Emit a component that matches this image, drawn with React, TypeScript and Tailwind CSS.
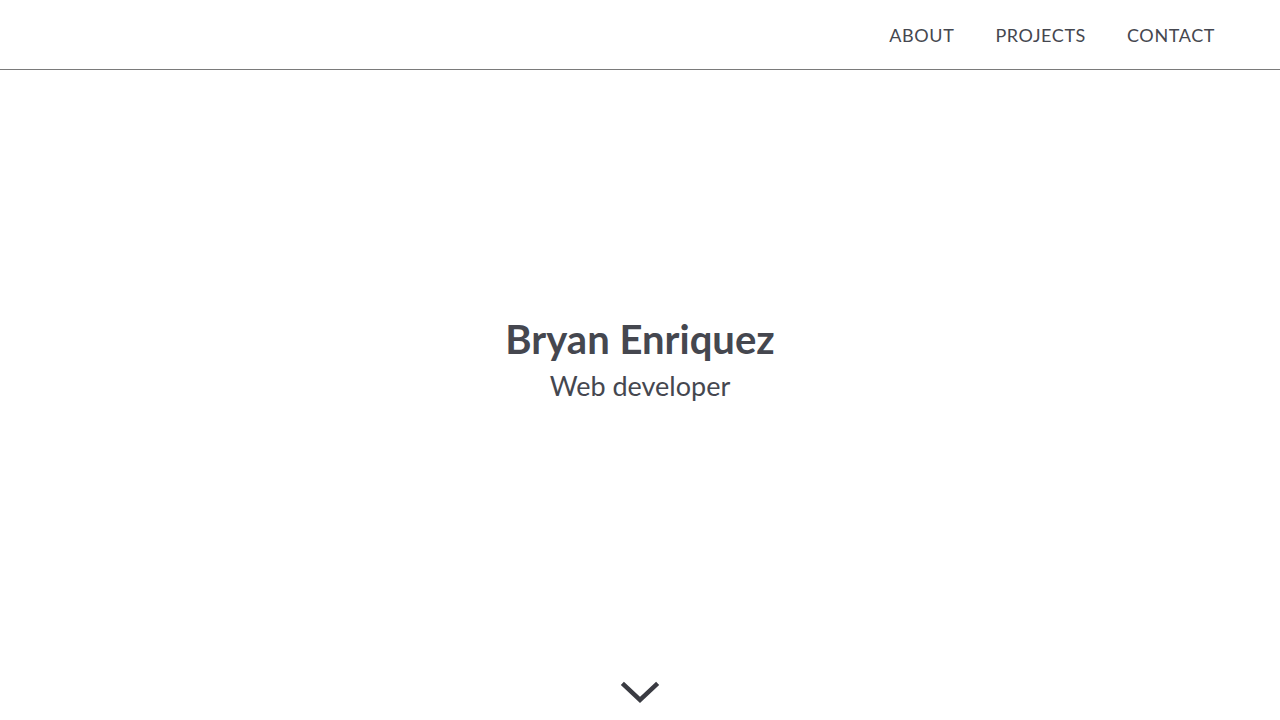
const App = () => {
  return (
    <div className="h-[720px] flex flex-col bg-white text-[#45474f] overflow-hidden" style={{ fontFamily: 'Lato, "Open Sans", sans-serif' }}>
      <header className="h-[70px] shrink-0 border-b border-[#7a7a7a] flex items-center justify-end pr-[65px]">
        <nav className="flex gap-[41px] text-[18px] tracking-[0.6px] uppercase pt-[1px]">
          <a href="#about">About</a>
          <a href="#projects">Projects</a>
          <a href="#contact">Contact</a>
        </nav>
      </header>

      <section className="flex-1 flex flex-col items-center justify-center pb-[32px]">
        <h1 className="text-[40px] font-bold leading-[48px]">Bryan Enriquez</h1>
        <p className="text-[27px] leading-[34px] mt-[6px]">Web developer</p>
      </section>

      <div className="h-[40px] flex justify-center items-start">
        <svg width="40" height="26" viewBox="0 0 40 26" fill="none" stroke="#3a3b42" strokeWidth="4.5" strokeLinecap="square">
          <path d="M4 5 L20 20 L36 5" />
        </svg>
      </div>
    </div>
  );
};

export default App;
